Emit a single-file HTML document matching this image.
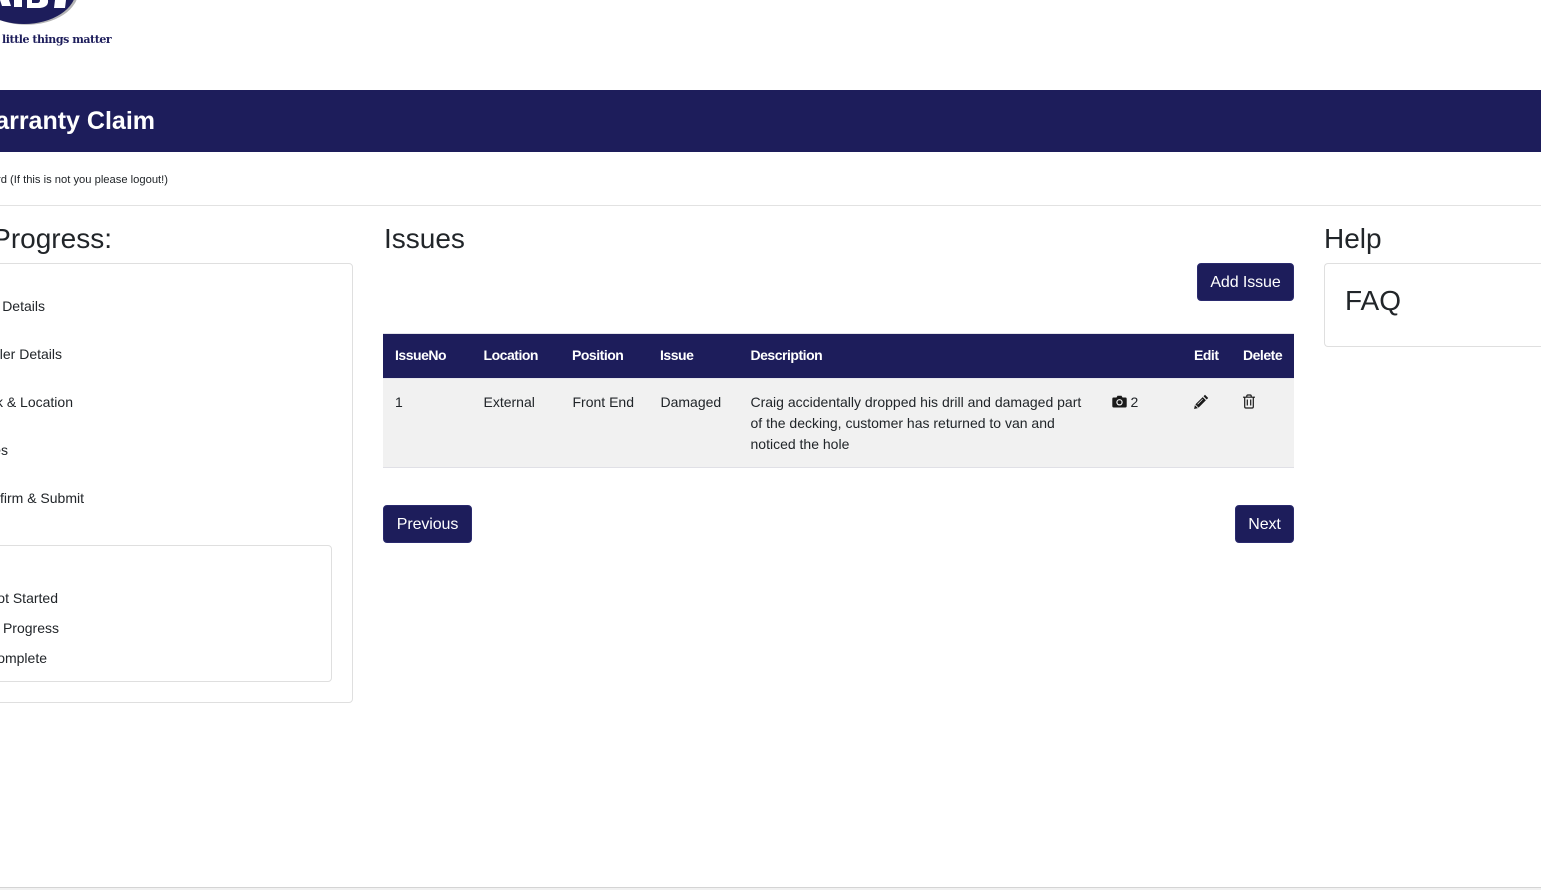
<!DOCTYPE html>
<html><head><meta charset="utf-8"><title>Warranty Claim</title>
<style>
html,body{margin:0;padding:0;background:#fff;width:1541px;height:890px;overflow:hidden}
body{position:relative;font-family:"Liberation Sans",sans-serif;font-size:14px;color:#212529}
.a{position:absolute;white-space:nowrap}
.r{position:absolute;white-space:nowrap;text-align:right}
.h{font-size:28px;line-height:34px}
.btn{position:absolute;background:#1d1d5b;border:1px solid #2a2a6e;border-radius:4px;color:#fff;font-size:16px;line-height:24px;padding:7px 0 0;box-sizing:border-box;height:38px;text-align:center;white-space:nowrap;letter-spacing:-.1px}
.box{position:absolute;border:1px solid #dfdfdf;border-radius:4px;box-sizing:border-box}
.th{position:absolute;top:347px;line-height:17px;font-weight:bold;color:#fff;white-space:nowrap;font-size:14px;letter-spacing:-.48px}
.td{position:absolute;line-height:21px;white-space:nowrap}
</style></head><body>

<svg class="a" style="left:0;top:0" width="90" height="30" viewBox="0 0 90 30">
<ellipse cx="25" cy="-10" rx="52" ry="34" fill="#b5b5b5" transform="translate(1.500 .8)"/>
<ellipse cx="24" cy="-10" rx="52" ry="34" fill="#1d1d5b"/>
<path d="M0 0h9l2 6H2zM14 0h8v7h-8zM27 0h21q1 7-8 8H27zM55 0h11l-1 8H54z" fill="#fff"/>
<path d="M32 0h8q0 3-3 3h-5z" fill="#1d1d5b"/>
</svg>
<div class="a" style="left:2px;top:31px;font-family:'DejaVu Serif','Liberation Serif',serif;font-weight:bold;font-size:11px;line-height:17px;color:#1d1d5b;letter-spacing:-.45px">little things matter</div>

<div class="a" style="left:0;top:90px;width:1541px;height:62px;background:#1d1d5b"></div>
<div class="r" style="right:1386px;top:106px;font-size:25px;line-height:30px;font-weight:bold;color:#fff">Warranty Claim</div>

<div class="r" style="right:1373px;top:173px;font-size:11.200px;line-height:14px;color:#212529">Logged in as Richard (If this is not you please logout!)</div>
<div class="a" style="left:0;top:205px;width:1541px;height:1px;background:#e2e2e2"></div>

<div class="r h" style="right:1429px;top:222px">Claim Progress:</div>
<div class="box" style="left:-40px;top:263px;width:393px;height:440px"></div>
<div class="r" style="right:1496px;top:298px;line-height:17px">Claim Details</div>
<div class="r" style="right:1479px;top:346px;line-height:17px">Installer Details</div>
<div class="r" style="right:1468px;top:394px;line-height:17px">Work &amp; Location</div>
<div class="r" style="right:1533px;top:442px;line-height:17px">Issues</div>
<div class="r" style="right:1457px;top:490px;line-height:17px">Confirm &amp; Submit</div>
<div class="box" style="left:-40px;top:545px;width:372px;height:137px"></div>
<div class="r" style="right:1483px;top:590px;line-height:17px">Not Started</div>
<div class="r" style="right:1482px;top:620px;line-height:17px">In Progress</div>
<div class="r" style="right:1494px;top:650px;line-height:17px">Complete</div>

<div class="a h" style="left:384px;top:222px">Issues</div>
<div class="btn" style="left:1197px;top:263px;width:97px">Add Issue</div>

<div class="a" style="left:383px;top:333px;width:911px;height:1px;background:#e4e4ea"></div>
<div class="a" style="left:383px;top:334px;width:911px;height:44px;background:#1d1d5b"></div>
<div class="a" style="left:383px;top:378px;width:911px;height:89px;background:#f1f1f1"></div>
<div class="a" style="left:383px;top:378px;width:911px;height:1px;background:#e6e6ec"></div>
<div class="a" style="left:383px;top:467px;width:911px;height:1px;background:#e0e0e6"></div>

<div class="th" style="left:395px">IssueNo</div>
<div class="th" style="left:483.500px">Location</div>
<div class="th" style="left:572px">Position</div>
<div class="th" style="left:660px">Issue</div>
<div class="th" style="left:750.500px">Description</div>
<div class="th" style="left:1194px">Edit</div>
<div class="th" style="left:1243px">Delete</div>

<div class="td" style="left:395px;top:392px">1</div>
<div class="td" style="left:483.500px;top:392px">External</div>
<div class="td" style="left:572.500px;top:392px">Front End</div>
<div class="td" style="left:660.500px;top:392px">Damaged</div>
<div class="td" style="left:750.500px;top:392px">Craig accidentally dropped his drill and damaged part<br>of the decking, customer has returned to van and<br>noticed the hole</div>
<svg class="a" style="left:1112px;top:395px" width="15" height="13" viewBox="0 0 15 13"><path fill="#1a1a1a" d="M1.500 2.500h3L5.500 .8h4l1 1.700h3A1.200 1.200 0 0 1 14.700 3.700v7.600a1.200 1.200 0 0 1-1.200 1.200h-12A1.200 1.200 0 0 1 .3 11.300V3.700A1.200 1.200 0 0 1 1.500 2.500z"/><circle cx="7.500" cy="7.300" r="3.200" fill="#f1f1f1"/><circle cx="7.500" cy="7.300" r="2" fill="#1a1a1a"/></svg>
<div class="td" style="left:1130.500px;top:392px">2</div>
<svg class="a" style="left:1194px;top:394px" width="15" height="15" viewBox="0 0 15 15"><path fill="#1a1a1a" d="M11 .8l3.200 3.200-1.500 1.500-3.200-3.200zM8.700 3.100l3.200 3.200-7.300 7.300-3.200-3.200zM.9 11.100l3 3-3.800.9z"/><path d="M8.600 5.200l-5 5" stroke="#f1f1f1" stroke-width=".7"/></svg>
<svg class="a" style="left:1242px;top:394px" width="14" height="15" viewBox="0 0 14 15"><path fill="none" stroke="#1a1a1a" stroke-width="1.200" d="M1 3.200h12M2.700 3.200v9.600q0 1.200 1.200 1.200h6.200q1.200 0 1.200-1.200V3.200M4.800 3.200V2q0-1 1-1h2.400q1 0 1 1v1.200M5.300 5.500v6M8.700 5.500v6"/></svg>

<div class="btn" style="left:383px;top:505px;width:89px">Previous</div>
<div class="btn" style="left:1235px;top:505px;width:59px">Next</div>

<div class="a h" style="left:1324px;top:222px">Help</div>
<div class="box" style="left:1324px;top:263px;width:217px;height:84px;border-right:0;border-radius:4px 0 0 4px"></div>
<div class="a h" style="left:1345px;top:284px">FAQ</div>

<div class="a" style="left:0;top:887px;width:1541px;height:1px;background:#d4d4d4"></div>
<div class="a" style="left:0;top:888px;width:1541px;height:2px;background:#f1f1f1"></div>
</body></html>
